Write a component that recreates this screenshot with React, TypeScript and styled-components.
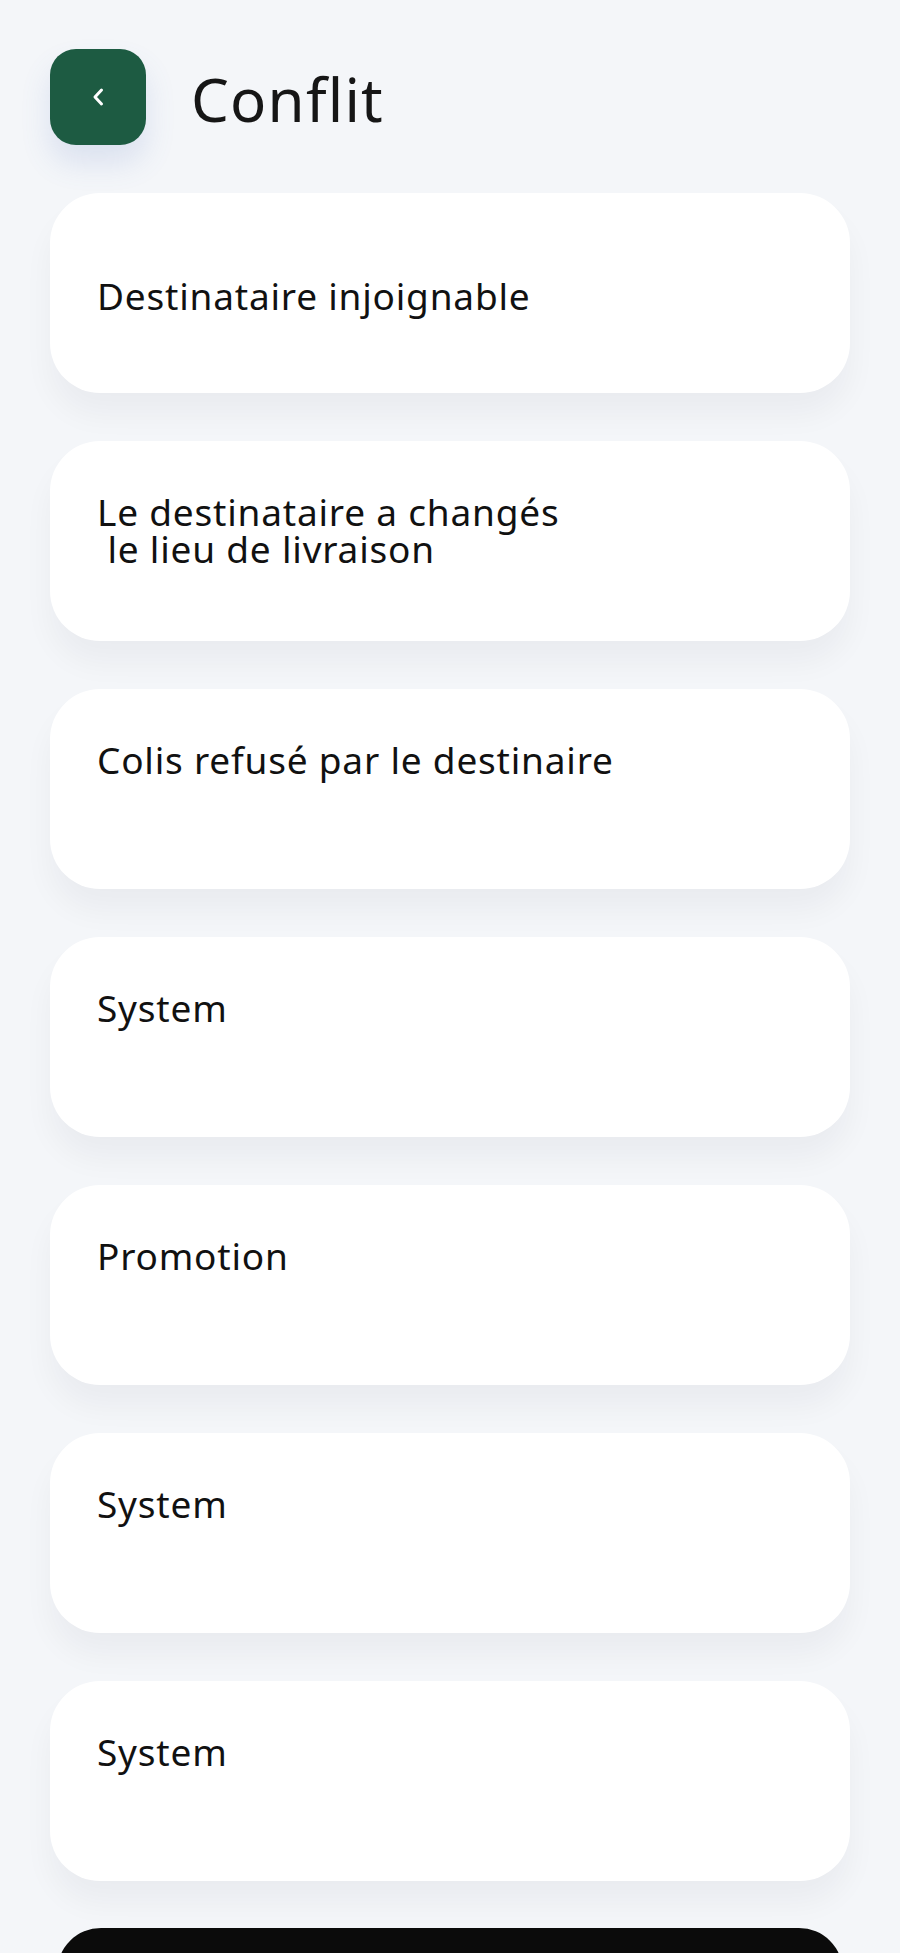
import styled, { createGlobalStyle } from 'styled-components'

const GlobalStyle = createGlobalStyle`
   * {
      box-sizing: border-box;
   }
   body {
      margin: 0;
      background: #f4f6f9;
      font-family: 'Noto Sans', Roboto, sans-serif;
      color: #111111;
   }
`

type Reason = {
   label: string
   centered?: boolean
}

const reasons: Reason[] = [
   { label: 'Destinataire injoignable', centered: true },
   { label: 'Le destinataire a changés\n le lieu de livraison' },
   { label: 'Colis refusé par le destinaire' },
   { label: 'System' },
   { label: 'Promotion' },
   { label: 'System' },
   { label: 'System' },
]

const App: React.FC = () => {
   return (
      <>
         <GlobalStyle />
         <Page>
            <Header>
               <BackButton aria-label="Retour">
                  <svg width="14" height="20" viewBox="0 0 14 20" fill="none">
                     <path
                        d="M10.5 3 L4 10 L10.5 17"
                        stroke="#ffffff"
                        strokeWidth="3"
                        strokeLinecap="round"
                        strokeLinejoin="round"
                     />
                  </svg>
               </BackButton>
               <Title>Conflit</Title>
            </Header>
            <List>
               {reasons.map((r, i) => (
                  <Card key={i} $centered={r.centered}>
                     <CardText>{r.label}</CardText>
                  </Card>
               ))}
            </List>
            <SubmitButton />
         </Page>
      </>
   )
}

export default App

const Page = styled.div`
   width: 900px;
   min-height: 1953px;
   padding: 49px 50px 0 50px;
   overflow: hidden;
`

const Header = styled.div`
   display: flex;
   align-items: center;
   gap: 45px;
   height: 96px;
`

const BackButton = styled.button`
   width: 96px;
   height: 96px;
   border: none;
   border-radius: 26px;
   background: #1d5b42;
   display: flex;
   align-items: center;
   justify-content: center;
   padding: 0;
   box-shadow: 0 18px 30px rgba(90, 120, 190, 0.16);
   cursor: pointer;
`

const Title = styled.h1`
   margin: 0;
   font-family: 'Noto Sans', Roboto, sans-serif;
   font-weight: 400;
   font-size: 60px;
   letter-spacing: 1.2px;
   line-height: 1;
   color: #161616;
   transform: translateY(2px);
`

const List = styled.div`
   margin-top: 48px;
   display: flex;
   flex-direction: column;
   gap: 48px;
`

const Card = styled.div<{ $centered?: boolean }>`
   height: 200px;
   background: #ffffff;
   border-radius: 50px;
   padding: ${(p) => (p.$centered ? '4px 47px 0' : '52px 47px 0')};
   display: flex;
   align-items: ${(p) => (p.$centered ? 'center' : 'flex-start')};
   box-shadow: 0 22px 30px rgba(20, 30, 50, 0.045);
`

const CardText = styled.p`
   margin: 0;
   font-family: 'Noto Sans', Roboto, sans-serif;
   font-size: 37px;
   letter-spacing: 0.8px;
   line-height: 37px;
   font-weight: 400;
   color: #111111;
   white-space: pre-wrap;
`

const SubmitButton = styled.div`
   margin: 47px 7px 0;
   height: 120px;
   background: #0b0b0b;
   border-radius: 44px;
`
